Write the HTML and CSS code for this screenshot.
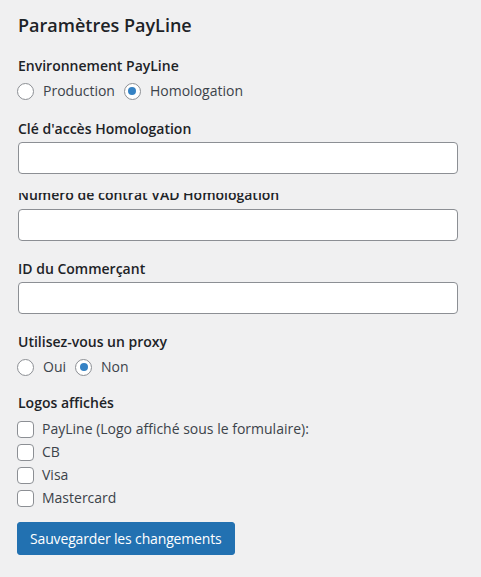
FILE: index.html
```html
<!DOCTYPE html>
<html lang="fr">
<head>
<meta charset="utf-8">
<title>Paramètres PayLine</title>
<link rel="stylesheet" href="styles.css">
</head>
<body>
<form class="settings">
  <h2 class="title">Paramètres PayLine</h2>

  <div class="field field-env">
    <div class="label">Environnement PayLine</div>
    <div class="options">
      <label class="opt"><input type="radio" name="env" class="radio"><span>Production</span></label>
      <label class="opt"><input type="radio" name="env" class="radio" checked><span>Homologation</span></label>
    </div>
  </div>

  <div class="field field-key">
    <div class="label">Clé d'accès Homologation</div>
    <input type="text" class="text-input">
  </div>

  <div class="field field-contract">
    <div class="label-clip"><div class="label">Numéro de contrat VAD Homologation</div></div>
    <input type="text" class="text-input">
  </div>

  <div class="field field-merchant">
    <div class="label">ID du Commerçant</div>
    <input type="text" class="text-input">
  </div>

  <div class="field field-proxy">
    <div class="label">Utilisez-vous un proxy</div>
    <div class="options">
      <label class="opt"><input type="radio" name="proxy" class="radio"><span>Oui</span></label>
      <label class="opt"><input type="radio" name="proxy" class="radio" checked><span>Non</span></label>
    </div>
  </div>

  <div class="field field-logos">
    <div class="label">Logos affichés</div>
    <div class="checks">
      <label class="check"><input type="checkbox" class="checkbox"><span>PayLine (Logo affiché sous le formulaire):</span></label>
      <label class="check"><input type="checkbox" class="checkbox"><span>CB</span></label>
      <label class="check"><input type="checkbox" class="checkbox"><span>Visa</span></label>
      <label class="check"><input type="checkbox" class="checkbox"><span>Mastercard</span></label>
    </div>
  </div>

  <button type="button" class="btn-primary">Sauvegarder les changements</button>
</form>
</body>
</html>
```
FILE: styles.css
```css
html, body {
  margin: 0;
  padding: 0;
  background: #f0f0f1;
}
body {
  font-family: "Open Sans", "Noto Sans", sans-serif;
  font-size: 14px;
  line-height: 20px;
  color: #3c434a;
}
.settings {
  display: flex;
  flex-direction: column;
  align-items: flex-start;
  padding: 13px 0 0 18px;
}
.title {
  margin: 0;
  font-size: 18px;
  line-height: 24px;
  font-weight: 600;
  color: #1d2327;
}
.field {
  display: flex;
  flex-direction: column;
  align-items: flex-start;
}
.label {
  font-weight: 600;
  color: #1d2327;
  line-height: 20px;
}
.field-env { margin-top: 19px; }
.field-key { margin-top: 18px; }
.field-contract { margin-top: 0; }
.field-merchant { margin-top: 18px; }
.field-proxy { margin-top: 18px; }
.field-logos { margin-top: 16px; }

.label-clip {
  height: 12px;
  margin-top: 19px;
  overflow: hidden;
}
.label-clip .label {
  margin-top: -8px;
}

.options {
  display: flex;
  margin-top: 5px;
  height: 20px;
  align-items: center;
}
.opt {
  display: flex;
  align-items: center;
  margin-right: 10px;
}
.opt span { margin-left: 9px; }

.radio {
  -webkit-appearance: none;
  appearance: none;
  margin: 0 0 0 -1px;
  width: 17px;
  height: 17px;
  border: 1px solid #8c8f94;
  border-radius: 50%;
  background: #fff;
  box-sizing: border-box;
  display: grid;
  place-items: center;
}
.radio:checked::before {
  content: "";
  width: 8px;
  height: 8px;
  border-radius: 50%;
  background: #3582c4;
}

.text-input {
  margin: 3px 0 0 0;
  width: 440px;
  height: 32px;
  box-sizing: border-box;
  border: 1px solid #8c8f94;
  border-radius: 4px;
  background: #fff;
  padding: 0 8px;
  font: inherit;
}
.field-contract .text-input { margin-top: 4px; }

.checks {
  display: flex;
  flex-direction: column;
  margin-top: 5px;
}
.check {
  display: flex;
  align-items: center;
  height: 22.8px;
}
.check span { margin-left: 8px; }
.checkbox {
  -webkit-appearance: none;
  appearance: none;
  margin: 1px 0 0 -1px;
  width: 17px;
  height: 17px;
  border: 1px solid #8c8f94;
  border-radius: 4px;
  background: #fff;
  box-sizing: border-box;
}

.btn-primary {
  margin: 13px 0 0 -1px;
  height: 33px;
  padding: 0 12px;
  border: 1px solid #2271b1;
  border-radius: 3px;
  background: #2271b1;
  color: #fff;
  font: inherit;
  letter-spacing: -0.15px;
  line-height: 31px;
}
```
